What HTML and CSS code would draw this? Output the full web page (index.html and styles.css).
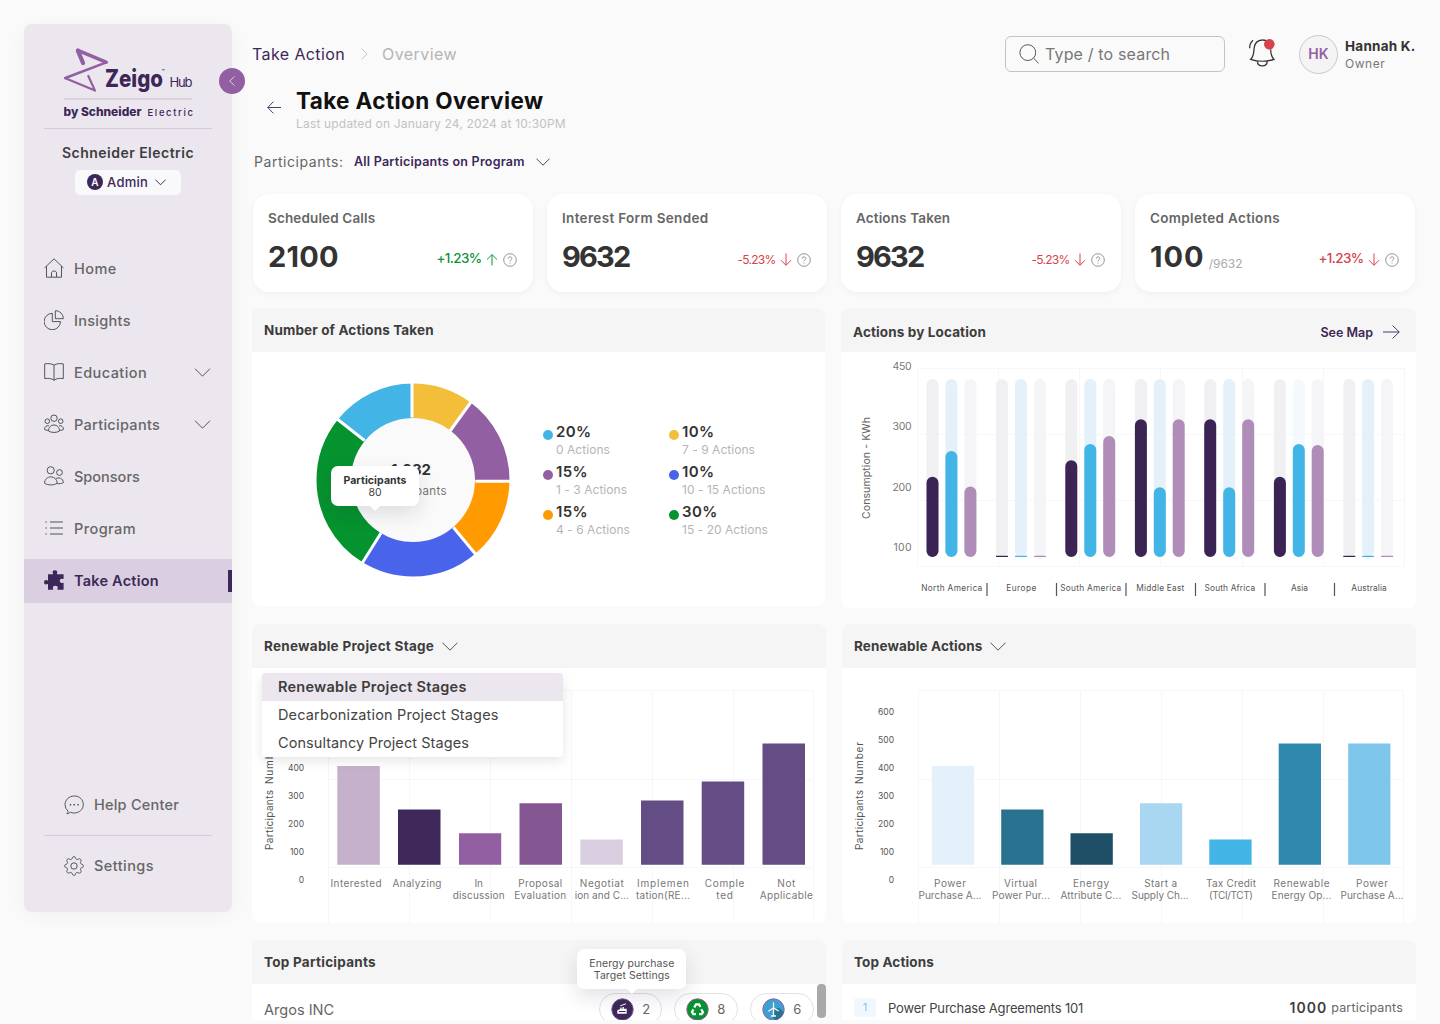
FILE: index.html
```html
<!DOCTYPE html>
<html lang="en">
<head>
<meta charset="utf-8">
<title>Take Action Overview</title>
<link rel="stylesheet" href="styles.css">
</head>
<body>
<svg width="0" height="0" class="defs" aria-hidden="true">
  <symbol id="chev" viewBox="0 0 16 9"><path d="M.5.7 8 8.2 15.500.7"/></symbol>
  <symbol id="up" viewBox="0 0 12 12"><path d="M6 11.500V.8M1 5.500 6 .6l5 4.900"/></symbol>
  <symbol id="down" viewBox="0 0 12 13"><path d="M6 .5v11.700M1 7.200 6 12.300l5-5.100"/></symbol>
  <symbol id="help" viewBox="0 0 14 14"><circle cx="7" cy="7" r="6.300"/><path d="M5.200 5.600c0-2.400 3.700-2.300 3.700-.1 0 1.400-1.900 1.400-1.900 2.800M7 9.700v.9"/></symbol>
</svg>
<div class="app">
  <aside class="sidebar">
    <svg class="logo" viewBox="64 47 130 72" width="130" height="72">
      <g fill="none" stroke="#925fa2" stroke-linecap="round" stroke-linejoin="round">
        <path stroke-width="4.200" d="M83 63 77.900 50.600"/>
        <path stroke-width="3.600" d="M77.900 50.300 106 62.200"/>
        <path stroke-width="2.600" d="M106.300 62.400 65.400 78"/>
        <path stroke-width="2.200" d="M65.400 78.200 95 90.600 88.300 76"/>
      </g>
      <g fill="#3d2759">
        <text x="105" y="86.500" font-size="24" font-weight="800" textLength="58" lengthAdjust="spacingAndGlyphs">Zeigo</text>
        <text x="161.500" y="72.500" font-size="5" font-weight="600">™</text>
        <text x="169.500" y="87" font-size="13" textLength="23">Hub</text>
        <text x="63.500" y="115.600" font-size="11.500" font-weight="800" textLength="78" lengthAdjust="spacingAndGlyphs">by Schneider</text>
        <text x="147.500" y="115.600" font-size="9.500" font-weight="500" textLength="45.500">Electric</text>
      </g>
      <path stroke="#c9bdd0" d="M64 99h128"/>
    </svg>
    <div class="rule"></div>
    <div class="org">Schneider Electric</div>
    <div class="role"><b>A</b><span>Admin</span><svg width="11" height="6.500"><use href="#chev"/></svg></div>
    <nav>
      <a class="item"><svg viewBox="0 0 20 20"><path d="M.6 9.900 10 .8l9.400 9.100M2.500 8.200v11h15v-11M7.500 19v-4.300c0-2.200 5-2.200 5 0V19"/></svg><span class="wide">Home</span></a>
      <a class="item"><svg viewBox="0 0 20 20"><path d="M8.300 3.300v8.300h8.200a8.200 8.200 0 1 1-8.200-8.300zM11.300.7c4.700.100 8 3.600 8 8h-8z"/></svg><span>Insights</span></a>
      <a class="item"><svg viewBox="0 0 20 20"><path d="M10 3.200C7.500 1.400 4.200 1.400.7 1.900v14.700c3.500-.6 6.800-.3 9.300 1.700 2.500-2 5.800-2.300 9.300-1.700V1.900C15.800 1.400 12.500 1.400 10 3.200v15"/></svg><span class="wide">Education</span><svg class="more"><use href="#chev"/></svg></a>
      <a class="item"><svg viewBox="0 0 20 20"><circle cx="10" cy="4.200" r="3.200"/><circle cx="3.300" cy="7.200" r="2.300"/><circle cx="16.700" cy="7.200" r="2.300"/><path d="M4.500 17c0-3.500 2.400-6 5.500-6s5.500 2.500 5.500 6c-2.500 1.900-8.500 1.900-11 0zM5 11.900c-2.300-.8-4.400.8-4.500 3.500.9.800 2.400 1 4 .9M15 11.900c2.300-.8 4.400.8 4.500 3.500-.9.800-2.400 1-4 .9"/></svg><span>Participants</span><svg class="more"><use href="#chev"/></svg></a>
      <a class="item"><svg viewBox="0 0 20 20"><circle cx="6.700" cy="4.300" r="3.600"/><circle cx="15.500" cy="6.500" r="2.900"/><path d="M.6 17.200c0-3.700 2.700-6.300 6.200-6.300s6.300 2.600 6.300 6.300c-3 2.300-9.500 2.300-12.500 0zM11.500 12.900c3.100-2.100 7.700-.8 7.900 3.700-1.500 1.100-4 1.300-6.200 1"/></svg><span class="tight">Sponsors</span></a>
      <a class="item"><svg viewBox="0 0 20 20"><path d="M6 4h13M6 10h13M6 16h13M1.400 4h1.400M1.400 10h1.400M1.400 16h1.400"/></svg><span class="wide">Program</span></a>
      <a class="item on"><svg viewBox="0 0 20 20"><path class="solid" d="M4 4.200h4.900c.6-.8-.3-1.200-.3-2.200C8.600.8 9.600.2 11 .2s2.300.7 2.300 1.800c0 .9-.8 1.400-.2 2.200H19.600v4.600c-.8.600-1.200-.1-2-.1-1.100 0-1.800.9-1.800 2.100s.7 2.200 1.800 2.200c.9 0 1.300-.7 2-.1v6.900h-6c-.7-.6.200-1.100.2-2.200 0-1.200-1-1.900-2.500-1.900s-2.500.7-2.500 1.900c0 1.100.8 1.600.2 2.200H4v-5.500c-.7-.6-1.200.3-2.200.3C.7 14.600.1 13.600.1 12.300s.6-2.300 1.700-2.300c1 0 1.500.9 2.200.3z"/></svg><span>Take Action</span></a>
    </nav>
    <div class="foot">
      <a class="item"><svg viewBox="0 0 20 20"><path d="M4.100 16.200A8.600 8.600 0 0 1 1 9.600C1 4.900 5 1 10.300 1s9 3.700 9 8.500-4 8.500-9 8.500c-1.500 0-2.800-.2-4-.8-.8 1.100-2 1.500-3.500 1.500.9-.8 1.300-1.500 1.300-2.500"/><path stroke-width="1.500" d="M5.700 9.700h1.500M9.500 9.700H11M13.300 9.700h1.500"/></svg><span>Help Center</span></a>
      <div class="rule"></div>
      <a class="item"><svg viewBox="0 0 20 20"><circle cx="10" cy="10" r="3.200"/><path d="M10 .7c1.500 0 1.400.9 1.800 1.900.4.900 1.200 1.100 2.100.7 1-.4 1.700-1 2.700 0s.4 1.800 0 2.700c-.4.900-.1 1.700.8 2.100 1 .4 1.900.4 1.900 1.900s-.9 1.400-1.900 1.800c-.9.400-1.200 1.200-.8 2.100.4 1 1 1.700 0 2.700s-1.700.4-2.700 0c-.9-.4-1.700-.1-2.100.8-.4 1-.3 1.900-1.800 1.900s-1.500-.9-1.900-1.900c-.4-.9-1.200-1.200-2.100-.8-.9.400-1.700 1-2.700 0s-.4-1.700 0-2.700c.4-.9.200-1.700-.7-2.100C1.600 11.400.7 11.500.7 10s.9-1.500 1.900-1.900c.9-.4 1.100-1.200.7-2.100-.4-.9-1-1.700 0-2.700s1.800-.4 2.700 0c.9.400 1.700.2 2.100-.7C8.500 1.600 8.500.7 10 .7z"/></svg><span class="wide">Settings</span></a>
    </div>
    <div class="collapse"><svg width="6" height="10" viewBox="0 0 6 10"><path d="M5.500.5.7 5l4.800 4.500"/></svg></div>
  </aside>

  <main>
    <header class="top">
      <div class="crumbs"><span class="c1">Take Action</span><svg width="7" height="12" viewBox="0 0 7 12"><path d="M.7.7 6.200 6 .7 11.300"/></svg><span class="c2">Overview</span></div>
      <div class="search"><svg width="20" height="20" viewBox="0 0 20 20"><circle cx="8.800" cy="8.600" r="7.900"/><path d="m14.600 14.300 4.900 4.900"/></svg><span>Type / to search</span></div>
      <svg class="bell" width="30" height="32" viewBox="0 0 30 32"><path d="M15.500 2C9.600 2 7.300 6.300 7 11.500c-.3 5.200-.9 7.700-3.400 9.900 7 2.400 16.700 2.400 23.400 0-2.300-2.200-3.200-4.800-3.400-9.900M10.300 23.300c.2 3 2.300 4.600 5 4.600s4.800-1.600 5-4.600M2.700 10.300C2.500 7.200 3.700 4.200 6 2.200"/><path d="M15.500 2c3 0 5.400 1.300 6.800 3.600.8 1.500 1.200 3.500 1.300 5.900"/><circle class="dot" cx="22.300" cy="6.300" r="5.300"/></svg>
      <div class="avatar">HK</div>
      <div class="who"><b>Hannah K.</b><span>Owner</span></div>
    </header>
    <div class="heading">
      <svg width="14" height="13" viewBox="0 0 14 13"><path d="M14 6.500H.8M6.300.7.8 6.500l5.500 5.800"/></svg>
      <div><h1>Take Action Overview</h1><p>Last updated on January 24, 2024 at 10:30PM</p></div>
    </div>
    <div class="filter"><span>Participants:</span><b>All Participants on Program</b><svg width="14" height="8"><use href="#chev"/></svg></div>

    <section class="stats">
      <div class="stat"><h3>Scheduled Calls</h3><div class="line"><strong class="n1">2100</strong><span class="delta big good">+1.23%</span><svg class="arr good" width="12" height="12"><use href="#up"/></svg><svg class="q" width="14" height="14"><use href="#help"/></svg></div></div>
      <div class="stat"><h3 class="h-wide">Interest Form Sended</h3><div class="line"><strong class="n2">9632</strong><span class="delta bad">-5.23%</span><svg class="arr bad" width="12" height="13"><use href="#down"/></svg><svg class="q" width="14" height="14"><use href="#help"/></svg></div></div>
      <div class="stat"><h3>Actions Taken</h3><div class="line"><strong class="n2">9632</strong><span class="delta bad">-5.23%</span><svg class="arr bad" width="12" height="13"><use href="#down"/></svg><svg class="q" width="14" height="14"><use href="#help"/></svg></div></div>
      <div class="stat"><h3 class="h-wide">Completed Actions</h3><div class="line"><strong class="n3">100</strong><small>/9632</small><span class="delta big bad">+1.23%</span><svg class="arr bad" width="12" height="13"><use href="#down"/></svg><svg class="q" width="14" height="14"><use href="#help"/></svg></div></div>
    </section>

    <section class="row r1">
      <div class="panel p-donut">
        <div class="ph"><h2>Number of Actions Taken</h2></div>
        <div class="donut-body">
          <div class="donut">
            <svg width="194" height="194" viewBox="315.500 383 194 194">
              <circle cx="412.500" cy="480" r="62.500" fill="#fafafa"/>
              <g fill="none" stroke-width="34.500" transform="rotate(-90 412.500 480)">
                <circle cx="412.500" cy="480" r="79.250" pathLength="360" stroke="#f3bf3a" stroke-dasharray="36.200 360"/>
                <circle cx="412.500" cy="480" r="79.250" pathLength="360" stroke="#925fa2" stroke-dasharray="54 360" stroke-dashoffset="-36.200"/>
                <circle cx="412.500" cy="480" r="79.250" pathLength="360" stroke="#ff9b00" stroke-dasharray="49.500 360" stroke-dashoffset="-90.200"/>
                <circle cx="412.500" cy="480" r="79.250" pathLength="360" stroke="#4964ea" stroke-dasharray="72.200 360" stroke-dashoffset="-139.600"/>
                <circle cx="412.500" cy="480" r="79.250" pathLength="360" stroke="#05932f" stroke-dasharray="97.100 360" stroke-dashoffset="-211.800"/>
                <circle cx="412.500" cy="480" r="79.250" pathLength="360" stroke="#43b4e6" stroke-dasharray="51.100 360" stroke-dashoffset="-308.900"/>
              </g>
              <path stroke="#fff" stroke-width="3" d="M411.500 417.500v-36M449.500 431 470.500 402M475 481.200h36M453 527.500 477 556.500M380.500 533 360.500 565M364 440.500 336 418.500"/>
              <g text-anchor="end"><text x="430.500" y="474.700" font-size="15" font-weight="700" fill="#333" textLength="40">1,032</text>
              <text x="446" y="495" font-size="11.500" fill="#777" textLength="68">Participants</text></g>
            </svg>
            <div class="tip t1"><b>Participants</b><span>80</span></div>
          </div>
          <div class="legend">
            <div><i style="background:#43b4e6"></i><p><b>20%</b><span>0 Actions</span></p></div>
            <div><i style="background:#f3bf3a"></i><p><b>10%</b><span>7 - 9 Actions</span></p></div>
            <div><i style="background:#925fa2"></i><p><b>15%</b><span>1 - 3 Actions</span></p></div>
            <div><i style="background:#4964ea"></i><p><b>10%</b><span>10 - 15 Actions</span></p></div>
            <div><i style="background:#ff9b00"></i><p><b>15%</b><span>4 - 6 Actions</span></p></div>
            <div><i style="background:#05932f"></i><p><b>30%</b><span>15 - 20 Actions</span></p></div>
          </div>
        </div>
      </div>
      <div class="panel p-loc">
        <div class="ph"><h2>Actions by Location</h2><a class="map">See Map<svg width="17" height="14" viewBox="0 0 17 14"><path d="M0 7h16M9.500.5 16.300 7l-6.800 6.500"/></svg></a></div>
        <svg class="chart" width="575" height="256" viewBox="841 352 575 256">
          <path class="grid" d="M917.800 368.500h487M917.800 434.500h487M917.800 500.500h487M917.800 566.500h487M917.800 368.500v198M998.500 368.500v198M1079.500 368.500v198M1160.500 368.500v198M1242.500 368.500v198M1323.500 368.500v198M1404.500 368.500v198"/>
          <g stroke-width="12" stroke-linecap="round">
            <path stroke="#f0eff2" d="M932.500 385v166M1001.900 385v166M1071.300 385v166M1140.900 385v166M1210.200 385v166M1279.900 385v166M1349.300 385v166"/>
            <path stroke="#e4f1fa" d="M951.400 385v166M1020.900 385v166M1090.300 385v166M1159.800 385v166M1229.200 385v166M1368.100 385v166"/>
            <path stroke="#f3f9fd" d="M1298.800 385v166"/>
            <path stroke="#f5f4f6" d="M970.400 385v166M1039.900 385v166M1109.200 385v166M1178.700 385v166M1248.200 385v166M1317.700 385v166M1387.100 385v166"/>
            <path stroke="#3b2354" d="M932.500 482.700V551M1071.300 466.200V551M1140.900 425.300V551M1210.200 425.300V551M1279.900 482.700V551"/>
            <path stroke="#43b4e6" d="M951.400 457V551M1090.300 450V551M1159.800 493.300V551M1229.200 493.300V551M1298.800 450V551"/>
            <path stroke="#b08cb9" d="M970.400 492.400V551M1109.200 442V551M1178.700 425.300V551M1248.200 425.300V551M1317.700 451V551"/>
          </g>
          <g stroke-width="1.200"><path stroke="#3b2354" d="M996 556.400h12M1343.300 556.400h12"/><path stroke="#43b4e6" d="M1015 556.400h12M1362.100 556.400h12"/><path stroke="#b08cb9" d="M1034 556.400h12M1381.100 556.400h12"/></g>
          <g font-size="10.500" fill="#777" text-anchor="end"><text x="911.500" y="370" textLength="19">450</text><text x="911.500" y="430.300" textLength="19">300</text><text x="911.500" y="490.700" textLength="19">200</text><text x="911.500" y="551" textLength="18">100</text></g>
          <text transform="translate(870 519) rotate(-90)" font-size="10.500" fill="#666" textLength="102">Consumption - KWh</text>
          <g font-size="8.300" fill="#555" text-anchor="middle"><text x="951.700" y="591" textLength="61">North America</text><text x="1021.300" y="591" textLength="30">Europe</text><text x="1090.700" y="591" textLength="61">South America</text><text x="1160.300" y="591" textLength="48">Middle East</text><text x="1229.800" y="591" textLength="50.500">South Africa</text><text x="1299.500" y="591" textLength="17">Asia</text><text x="1369" y="591" textLength="35.500">Australia</text></g>
          <path stroke="#555" stroke-width="1.200" d="M987 583v13M1056.500 583v13M1126 583v13M1195.500 583v13M1265 583v13M1334.500 583v13"/>
        </svg>
      </div>
    </section>

    <section class="row r2">
      <div class="panel p-stage">
        <div class="ph"><h2 class="h2-wide">Renewable Project Stage</h2><svg class="ch" width="16" height="9"><use href="#chev"/></svg></div>
        <svg class="chart" width="574" height="255" viewBox="252 668 574 255">
          <path class="grid" d="M328.500 690.500h485M328.500 779.500h485M328.500 867.500h485M328.500 690.500v233M409.500 690.500v233M490.500 690.500v233M571.500 690.500v233M652.500 690.500v233M733.500 690.500v233M813.500 690.500v233"/>
          <path fill="#c6b1cd" d="M337.300 766h42.500v98.800h-42.500z"/><path fill="#3f285a" d="M398 809.500h42.500v55.300H398z"/><path fill="#925fa2" d="M459 833.300h42.200v31.500H459z"/><path fill="#845692" d="M519.500 803.200H562v61.600h-42.500z"/><path fill="#d9cfe1" d="M580.300 839.500h42.500v25.300h-42.500z"/><path fill="#634d84" d="M641 800.500h42.500v64.300H641zM701.700 781.500h42.500v83.300h-42.500zM762.500 743.500H805v121.300h-42.500z"/>
          <g font-size="8.500" fill="#555" text-anchor="end"><text x="304" y="771" textLength="16">400</text><text x="304" y="799" textLength="16">300</text><text x="304" y="827" textLength="16">200</text><text x="304" y="855" textLength="14">100</text><text x="304" y="883">0</text></g>
          <text transform="translate(273 850) rotate(-90)" font-size="10" fill="#555" textLength="60">Participants</text><text transform="translate(273 784) rotate(-90)" font-size="10" fill="#555" textLength="42">Number</text>
          <g font-size="10" fill="#777" text-anchor="middle"><text x="356" y="887" textLength="51">Interested</text><text x="417" y="887" textLength="49">Analyzing</text><text x="478.700" y="887">In</text><text x="478.700" y="899" textLength="52">discussion</text><text x="540.200" y="887" textLength="44">Proposal</text><text x="540.200" y="899" textLength="52">Evaluation</text><text x="601.800" y="887" textLength="44">Negotiat</text><text x="601.800" y="899" textLength="54">ion and C...</text><text x="663" y="887" textLength="52">Implemen</text><text x="663" y="899" textLength="54">tation(RE...</text><text x="724.600" y="887" textLength="39.500">Comple</text><text x="724.600" y="899" textLength="16.500">ted</text><text x="786.300" y="887" textLength="18">Not</text><text x="786.300" y="899" textLength="53">Applicable</text></g>
        </svg>
        <ul class="menu"><li class="sel">Renewable Project Stages</li><li class="m2">Decarbonization Project Stages</li><li class="m3">Consultancy Project Stages</li></ul>
      </div>
      <div class="panel">
        <div class="ph"><h2>Renewable Actions</h2><svg class="ch" width="16" height="9"><use href="#chev"/></svg></div>
        <svg class="chart" width="574" height="255" viewBox="842 668 574 255">
          <path class="grid" d="M918.500 690.500h485M918.500 779.500h485M918.500 867.500h485M918.500 690.500v233M999.500 690.500v233M1080.500 690.500v233M1161.500 690.500v233M1242.500 690.500v233M1323.500 690.500v233M1403.500 690.500v233"/>
          <path fill="#e4f1fa" d="M931.800 766H974v98.800h-42.200z"/><path fill="#28728f" d="M1001.200 809.500h42.300v55.300h-42.300z"/><path fill="#1e4f66" d="M1070.500 833.300h42.300v31.500h-42.300z"/><path fill="#a9d6f0" d="M1140 803.200h42.200v61.600H1140z"/><path fill="#43b4e6" d="M1209.300 839.500h42.300v25.300h-42.300z"/><path fill="#2f88ae" d="M1278.700 743.500h42.300v121.300h-42.300z"/><path fill="#7ec5ec" d="M1348.200 743.500h42.200v121.300h-42.200z"/>
          <g font-size="8.500" fill="#555" text-anchor="end"><text x="894" y="715" textLength="16">600</text><text x="894" y="743" textLength="16">500</text><text x="894" y="771" textLength="16">400</text><text x="894" y="799" textLength="16">300</text><text x="894" y="827" textLength="16">200</text><text x="894" y="855" textLength="14">100</text><text x="894" y="883">0</text></g>
          <text transform="translate(863 850) rotate(-90)" font-size="10" fill="#555" textLength="60">Participants</text><text transform="translate(863 784) rotate(-90)" font-size="10" fill="#555" textLength="42">Number</text>
          <g font-size="10" fill="#777" text-anchor="middle"><text x="950" y="887" textLength="32">Power</text><text x="950" y="899" textLength="63">Purchase A...</text><text x="1020.500" y="887" textLength="33">Virtual</text><text x="1021" y="899" textLength="58">Power Pur...</text><text x="1091" y="887" textLength="36">Energy</text><text x="1091" y="899" textLength="61">Attribute C...</text><text x="1160.700" y="887" textLength="33">Start a</text><text x="1160" y="899" textLength="57">Supply Ch...</text><text x="1231" y="887" textLength="50">Tax Credit</text><text x="1231" y="899" textLength="44">(TCI/TCT)</text><text x="1301.500" y="887" textLength="56">Renewable</text><text x="1301.500" y="899" textLength="60">Energy Op...</text><text x="1372" y="887" textLength="32">Power</text><text x="1372" y="899" textLength="63">Purchase A...</text></g>
        </svg>
      </div>
    </section>

    <section class="row r3">
      <div class="panel">
        <div class="ph"><h2 class="h2-wide">Top Participants</h2></div>
        <div class="tp"><span class="name">Argos INC</span>
          <div class="pill"><svg width="23" height="23" viewBox="0 0 23 23"><circle cx="11.500" cy="11.500" r="10.700" fill="#3f285a" stroke="#7a5a96"/><path fill="#fff" d="M6.300 15.700v-3.500l3-1.200V9.500h1.300v1.300h1V9h1.300v1.800h2.800v4.900zM9 7.500l6-2.200v1L9.500 8.300z"/><path stroke="#3f285a" d="M8 13.500h6.500"/></svg>2<div class="tip t2">Energy purchase<br>Target Settings</div></div>
          <div class="pill"><svg width="23" height="23" viewBox="0 0 23 23"><circle cx="11.500" cy="11.500" r="10.700" fill="#05932f" stroke="#925fa2"/><path fill="none" stroke="#fff" stroke-width="2.300" d="M8.300 9.500 10 6.300h3l1.500 2.500M15.300 11.200l1.600 3-1.200 2H13M10 16.200H7.300L6 14l1.400-2.600"/></svg>8</div>
          <div class="pill"><svg width="23" height="23" viewBox="0 0 23 23"><circle cx="11.500" cy="11.500" r="10.700" fill="#3f9fd0" stroke="#925fa2"/><path fill="#28728f" d="m12 11 5-1 4.500 4c-1 4-4 7-8 8l-3-3z"/><path fill="none" stroke="#fff" stroke-width="1.300" stroke-linecap="round" d="M11.500 10V4.800M11.500 10l-4.700 3M11.500 10l4.800 2.700M11.500 11v7M9.500 18h4"/></svg>6</div>
          <i class="scroll"></i>
        </div>
      </div>
      <div class="panel">
        <div class="ph"><h2>Top Actions</h2></div>
        <div class="ta"><i>1</i><span class="act">Power Purchase Agreements 101</span><b>1000</b><span class="cnt">participants</span></div>
      </div>
    </section>
    <div class="edge"></div>
  </main>
</div>
</body>
</html>
```
FILE: styles.css
```css
* { box-sizing: border-box; margin: 0; padding: 0; }
body { width: 1440px; height: 1024px; overflow: hidden; background: #fafafa; color: #3d3d3d; font-family: Inter, "Open Sans", sans-serif; font-size: 14px; }
.defs { position: absolute; }
svg { flex: none; fill: none; display: block; }
.app { display: flex; height: 1024px; padding: 24px 24px 0; gap: 20px; }

.sidebar { position: relative; width: 208px; height: 888px; flex: none; border-radius: 8px; background: #ece7ee; box-shadow: 0 4px 20px rgba(0,0,0,.04); display: flex; flex-direction: column; padding-top: 23px; }
.logo { margin-left: 40px; }
.rule { height: 1px; margin: 9px 20px 0; background: #d3ccd8; }
.org { margin-top: 14px; height: 20px; line-height: 20px; text-align: center; font-weight: 600; font-size: 14px; letter-spacing: .034em; }
.role { align-self: center; display: flex; align-items: center; width: 106px; height: 25px; margin-top: 7px; padding: 0 0 1px 12px; border-radius: 5px; background: #f9f8fa; color: #3d2759; font-size: 13px; font-weight: 500; letter-spacing: .02em; }
.role b { width: 16px; height: 16px; border-radius: 50%; background: #3d2759; color: #fff; font-size: 10px; line-height: 16px; text-align: center; margin-right: 4px; font-weight: 600; }
.role svg { stroke: #3d2759; margin-left: 7px; stroke-width: 1.4; }
nav { margin-top: 52px; display: flex; flex-direction: column; gap: 8px; }
.item { display: flex; align-items: center; height: 44px; padding: 0 21px 2px 20px; color: #666; font-size: 14.5px; font-weight: 500; letter-spacing: .02em; }
.item .wide { letter-spacing: .03em; }
.item .tight { letter-spacing: 0; }
.item svg { width: 20px; height: 20px; margin-right: 10px; stroke: #555; stroke-width: 1; }
.item .more { width: 17px; height: 9px; margin: 0 0 0 auto; }
.item.on { background: #dacfe0; color: #3d2759; font-weight: 600; letter-spacing: .015em; border-right: 4px solid transparent; border-image: linear-gradient(#dacfe0 11px, #3d2759 11px, #3d2759 33px, #dacfe0 33px) 0 4 0 0; }
.item .solid { fill: #3d2759; stroke: none; }
.foot { margin-top: auto; margin-bottom: 23px; }
.foot .item { padding-left: 40px; padding-bottom: 3px; letter-spacing: .015em; }
.foot .rule { margin: 7px 20px 9px; }
.collapse { position: absolute; left: 195px; top: 44px; width: 26px; height: 26px; border-radius: 50%; background: #925fa2; display: flex; align-items: center; justify-content: center; }
.collapse svg { stroke: #dccbe2; }

main { width: 1164px; flex: none; position: relative; }
.top { display: flex; align-items: center; height: 60px; }
.crumbs { display: flex; align-items: center; width: 753px; font-size: 16px; }
.c1 { width: 93px; color: #3d2759; letter-spacing: .025em; white-space: nowrap; }
.crumbs svg { margin: 0 14px 0 16px; stroke: #c4c4c4; }
.c2 { color: #b5b5b5; letter-spacing: .028em; }
.search { display: flex; align-items: center; gap: 6px; width: 220px; height: 36px; padding-left: 13px; border: 1px solid #c4c4c4; border-radius: 6px; font-size: 16px; color: #777; letter-spacing: .01em; }
.search svg { stroke: #555; }
.bell { margin-left: 22px; stroke: #333; stroke-width: 1.3; }
.bell .dot { fill: #d6434a; stroke: none; }
.avatar { width: 39px; height: 39px; margin-left: 22px; border: 1.500px solid #c9c9c9; border-radius: 50%; background: #f4f4f4; color: #925fa2; font-weight: 600; font-size: 14px; line-height: 36px; text-align: center; }
.who { margin-left: 7px; padding-top: 2px; white-space: nowrap; }
.who b { display: block; font-size: 13.500px; line-height: 17px; color: #333; letter-spacing: .017em; }
.who span { display: block; font-size: 12px; line-height: 17px; color: #777; letter-spacing: .045em; }
.heading { display: flex; height: 54px; padding-left: 15px; gap: 15px; }
.heading svg { stroke: #3d2759; margin-top: 17px; stroke-width: .9; }
h1 { font-size: 22.500px; line-height: 28px; margin-top: 3px; color: #111; font-weight: 700; white-space: nowrap; letter-spacing: .38px; }
.heading p { font-size: 12px; line-height: 16px; color: #c2c2c2; letter-spacing: .18px; margin-top: 1px; }
.filter { display: flex; align-items: center; height: 47px; padding-left: 2px; }
.filter span { width: 100px; font-size: 14px; color: #666; letter-spacing: .04em; }
.filter b { font-size: 12.500px; font-weight: 600; color: #3d2759; letter-spacing: .24px; }
.filter svg { stroke: #3d2759; margin-left: 11.500px; }

.stats { display: grid; grid-template-columns: repeat(4, 280px); gap: 14px; margin: 9px 0 0 1px; }
.stat { height: 98px; padding: 14px 15px 0; border-radius: 16px; background: #fff; box-shadow: 0 2px 6px rgba(0,0,0,.045); }
.stat h3 { font-size: 13.500px; line-height: 20px; font-weight: 600; color: #666; letter-spacing: .14px; }
.stat .h-wide { letter-spacing: .33px; }
.line { display: flex; align-items: center; height: 40px; margin-top: 8px; }
.line strong { font-size: 29px; font-weight: 700; color: #333; }
.line .n1 { letter-spacing: .2px; }
.line .n2 { letter-spacing: -1.800px; }
.line .n3 { letter-spacing: 1px; }
.line small { font-size: 12px; color: #aaa; margin: 14px 0 0 4px; }
.delta { margin-left: auto; padding-top: 6px; font-size: 12px; letter-spacing: -.75px; margin-right: -.5px; }
.delta.big { font-size: 13.500px; padding-top: 3px; font-weight: 500; letter-spacing: -.65px; }
.arr { margin: 7px 5px 0 5px; }
.q { margin: 7px 1px 0 0; stroke: #888; stroke-width: .9; }
.good { color: #0f9535; } .arr.good { stroke: #0f9535; }
.bad { color: #d6434a; } .arr.bad { stroke: #d6434a; }

.row { display: flex; gap: 16px; align-items: flex-start; }
.r1, .r2 { margin-top: 16px; }
.panel { position: relative; width: 574px; border-radius: 8px; background: #fff; }
.ph { display: flex; align-items: center; height: 44px; padding: 0 16px 0 12px; background: #f5f5f5; border-radius: 8px 8px 0 0; }
h2 { font-size: 13.500px; font-weight: 700; color: #3d3d3d; white-space: nowrap; letter-spacing: .13px; }
.h2-wide { letter-spacing: .27px; }
.ph .ch { margin-left: 8px; stroke: #555; }
.p-donut { width: 573px; height: 298px; }
.p-loc { width: 575px; height: 300px; }
.p-loc h2 { padding-top: 4px; }
.map { margin-left: auto; display: flex; align-items: center; gap: 10px; padding-top: 4px; font-size: 12.500px; font-weight: 600; color: #3d2759; }
.map svg { stroke: #3d2759; stroke-width: .9; }
.chart { overflow: hidden; }
.grid { stroke: #f7f7f7; }
.donut-body { display: flex; padding: 31px 0 0 64px; }
.donut { position: relative; width: 194px; height: 194px; }
.tip { position: absolute; z-index: 2; background: #fff; border-radius: 7px; text-align: center; box-shadow: 0 8px 20px rgba(40,20,60,.13); color: #444; }
.tip::after { content: ""; position: absolute; left: 50%; bottom: -5px; margin-left: -6px; border: 6px solid transparent; border-bottom: 0; border-top-color: #fff; }
.t1 { left: 15px; top: 83px; width: 88px; height: 40px; padding-top: 9px; font-size: 10.500px; line-height: 12px; }
.t1 b { display: block; font-weight: 700; color: #333; letter-spacing: .1px; }
.t2 { left: -23px; top: -45px; width: 109px; height: 40px; padding-top: 9px; font-size: 10.500px; line-height: 12px; color: #555; letter-spacing: .08px; }
.legend { display: grid; grid-template-columns: 126px 130px; grid-auto-rows: 40px; padding: 39px 0 0 33px; }
.legend div { display: flex; gap: 3px; }
.legend i { width: 10px; height: 10px; border-radius: 50%; margin-top: 8px; }
.legend p { white-space: nowrap; }
.legend b { display: block; font-size: 15px; line-height: 20px; color: #333; font-weight: 600; letter-spacing: .4px; }
.legend span { display: block; font-size: 12px; line-height: 15px; color: #b5b5b5; letter-spacing: .04px; }
.r2 .panel { height: 299px; }
.menu { position: absolute; left: 10px; top: 49px; width: 301px; height: 84px; border-radius: 4px; background: #fff; box-shadow: 0 4px 12px rgba(0,0,0,.1); overflow: hidden; list-style: none; }
.menu li { height: 28px; line-height: 28px; padding-left: 16px; font-size: 14.500px; color: #444; }
.menu .sel { background: #ece7ee; font-weight: 600; color: #3d3d3d; letter-spacing: .26px; }
.menu .m2 { letter-spacing: .15px; }
.menu .m3 { letter-spacing: .07px; }
.r3 { margin-top: 17px; }
.r3 .panel { height: 80px; border-radius: 8px 8px 0 0; }
.tp { display: flex; align-items: flex-start; height: 36px; padding: 9px 0 0 12px; }
.name { width: 336px; font-size: 14.500px; line-height: 33px; color: #666; letter-spacing: .02px; }
.pill { position: relative; display: flex; align-items: center; gap: 8px; width: 63px; height: 32px; margin-right: 12px; border: 1px solid #e2e2e2; border-radius: 16px; padding-left: 11px; font-size: 13px; color: #666; }
.pill + .pill { width: 64px; }
.scroll { width: 9px; height: 34px; border-radius: 4px; background: #a9a9a9; margin: -9px 0 0 -9px; }
.edge { position: absolute; left: 0; top: 996px; width: 1164px; height: 4px; background: #fafafa; }
.ta { display: flex; align-items: center; height: 36px; padding: 11px 13px 0 12px; }
.ta i { width: 22px; height: 19px; border-radius: 3px; background: #f0f8fd; color: #7ec5ec; font-style: normal; font-size: 11px; line-height: 19px; text-align: center; }
.act { margin-left: 12px; font-size: 13px; color: #444; letter-spacing: -.18px; }
.ta b { margin-left: auto; font-weight: 600; font-size: 14px; margin-right: 4px; letter-spacing: 1px; }
.cnt { font-size: 12.500px; color: #666; letter-spacing: .17px; }
```
